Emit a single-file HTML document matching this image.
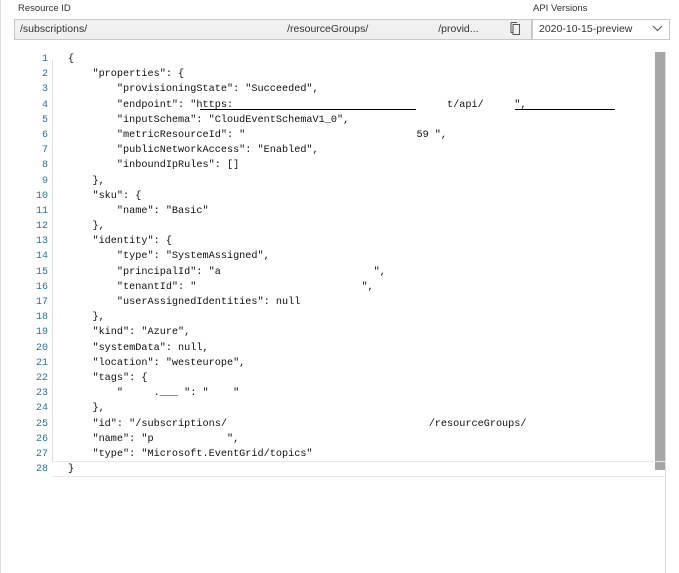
<!DOCTYPE html>
<html><head><style>
body{margin:0;width:679px;height:573px;background:#fff;position:relative;overflow:hidden;font-family:"Liberation Sans",sans-serif;}
.lbl{position:absolute;top:3px;font-size:9.5px;color:#333;}
.inp{position:absolute;top:19px;height:19px;border:1px solid #c8c8c8;font-size:10.5px;color:#333;line-height:19px;box-sizing:content-box;}
.code{position:absolute;left:0;top:52px;font-family:"Liberation Mono",monospace;font-size:10.2px;color:#111;}
.ln{position:absolute;left:0;width:48px;text-align:right;color:#237893;font-size:10px}
.tx{position:absolute;left:68px;width:590px;}
.r{height:15.19px;line-height:15.19px;position:relative;white-space:pre}
</style></head><body>
<div style="position:absolute;left:0;top:0;width:1px;height:573px;background:#ddd"></div>
<div class="lbl" style="left:18px">Resource ID</div>
<div class="lbl" style="left:533px">API Versions</div>
<div class="inp" style="left:14px;width:511px;background:#f0f0f0;padding-left:5px">/subscriptions/<span style="display:inline-block;width:200px"></span>/resourceGroups/<span style="display:inline-block;width:70px"></span>/provid...</div>
<svg style="position:absolute;left:510px;top:22px" width="12" height="14" viewBox="0 0 12 14"><path d="M3 2.5h6.5v10H3z M1 0.5h6" fill="none" stroke="#555" stroke-width="1"/><path d="M1 0.5v10h2" fill="none" stroke="#555"/></svg>
<div class="inp" style="left:532px;width:130px;background:#fff;padding-left:6px">2020-10-15-preview</div>
<svg style="position:absolute;left:652px;top:25px" width="11" height="7"><path d="M1 1l4.5 4.5L10 1" fill="none" stroke="#555"/></svg>
<div style="position:absolute;left:655px;top:52px;width:11px;height:418px;background:#a6a6a6"></div>
<div style="position:absolute;left:665px;top:52px;width:1px;height:521px;background:#ddd"></div>
<div style="position:absolute;left:52px;top:461px;width:613px;height:1px;background:#e8e8e8"></div>
<div style="position:absolute;left:52px;top:476px;width:613px;height:1px;background:#e8e8e8"></div>
<div style="position:absolute;left:52px;top:60px;width:1px;height:401px;background:#ddd"></div>
<div class="code">
<div class="ln"><div class="r">1</div><div class="r">2</div><div class="r">3</div><div class="r">4</div><div class="r">5</div><div class="r">6</div><div class="r">7</div><div class="r">8</div><div class="r">9</div><div class="r">10</div><div class="r">11</div><div class="r">12</div><div class="r">13</div><div class="r">14</div><div class="r">15</div><div class="r">16</div><div class="r">17</div><div class="r">18</div><div class="r">19</div><div class="r">20</div><div class="r">21</div><div class="r">22</div><div class="r">23</div><div class="r">24</div><div class="r">25</div><div class="r">26</div><div class="r">27</div><div class="r">28</div></div>
<div class="tx"><div class="r">{</div><div class="r">    "properties": {</div><div class="r">        "provisioningState": "Succeeded",</div><div class="r">        "endpoint": "https:                                   t/api/     ",</div><div class="r">        "inputSchema": "CloudEventSchemaV1_0",</div><div class="r">        "metricResourceId": "                            59 ",</div><div class="r">        "publicNetworkAccess": "Enabled",</div><div class="r">        "inboundIpRules": []</div><div class="r">    },</div><div class="r">    "sku": {</div><div class="r">        "name": "Basic"</div><div class="r">    },</div><div class="r">    "identity": {</div><div class="r">        "type": "SystemAssigned",</div><div class="r">        "principalId": "a                         ",</div><div class="r">        "tenantId": "                           ",</div><div class="r">        "userAssignedIdentities": null</div><div class="r">    },</div><div class="r">    "kind": "Azure",</div><div class="r">    "systemData": null,</div><div class="r">    "location": "westeurope",</div><div class="r">    "tags": {</div><div class="r">        "     .___ ": "    "</div><div class="r">    },</div><div class="r">    "id": "/subscriptions/                                 /resourceGroups/</div><div class="r">    "name": "p            ",</div><div class="r">    "type": "Microsoft.EventGrid/topics"</div><div class="r">}</div></div>
</div>
<div style="position:absolute;left:200px;top:109px;width:216px;height:1px;background:#000"></div>
<div style="position:absolute;left:515px;top:109px;width:100px;height:1px;background:#000"></div>
</body></html>
